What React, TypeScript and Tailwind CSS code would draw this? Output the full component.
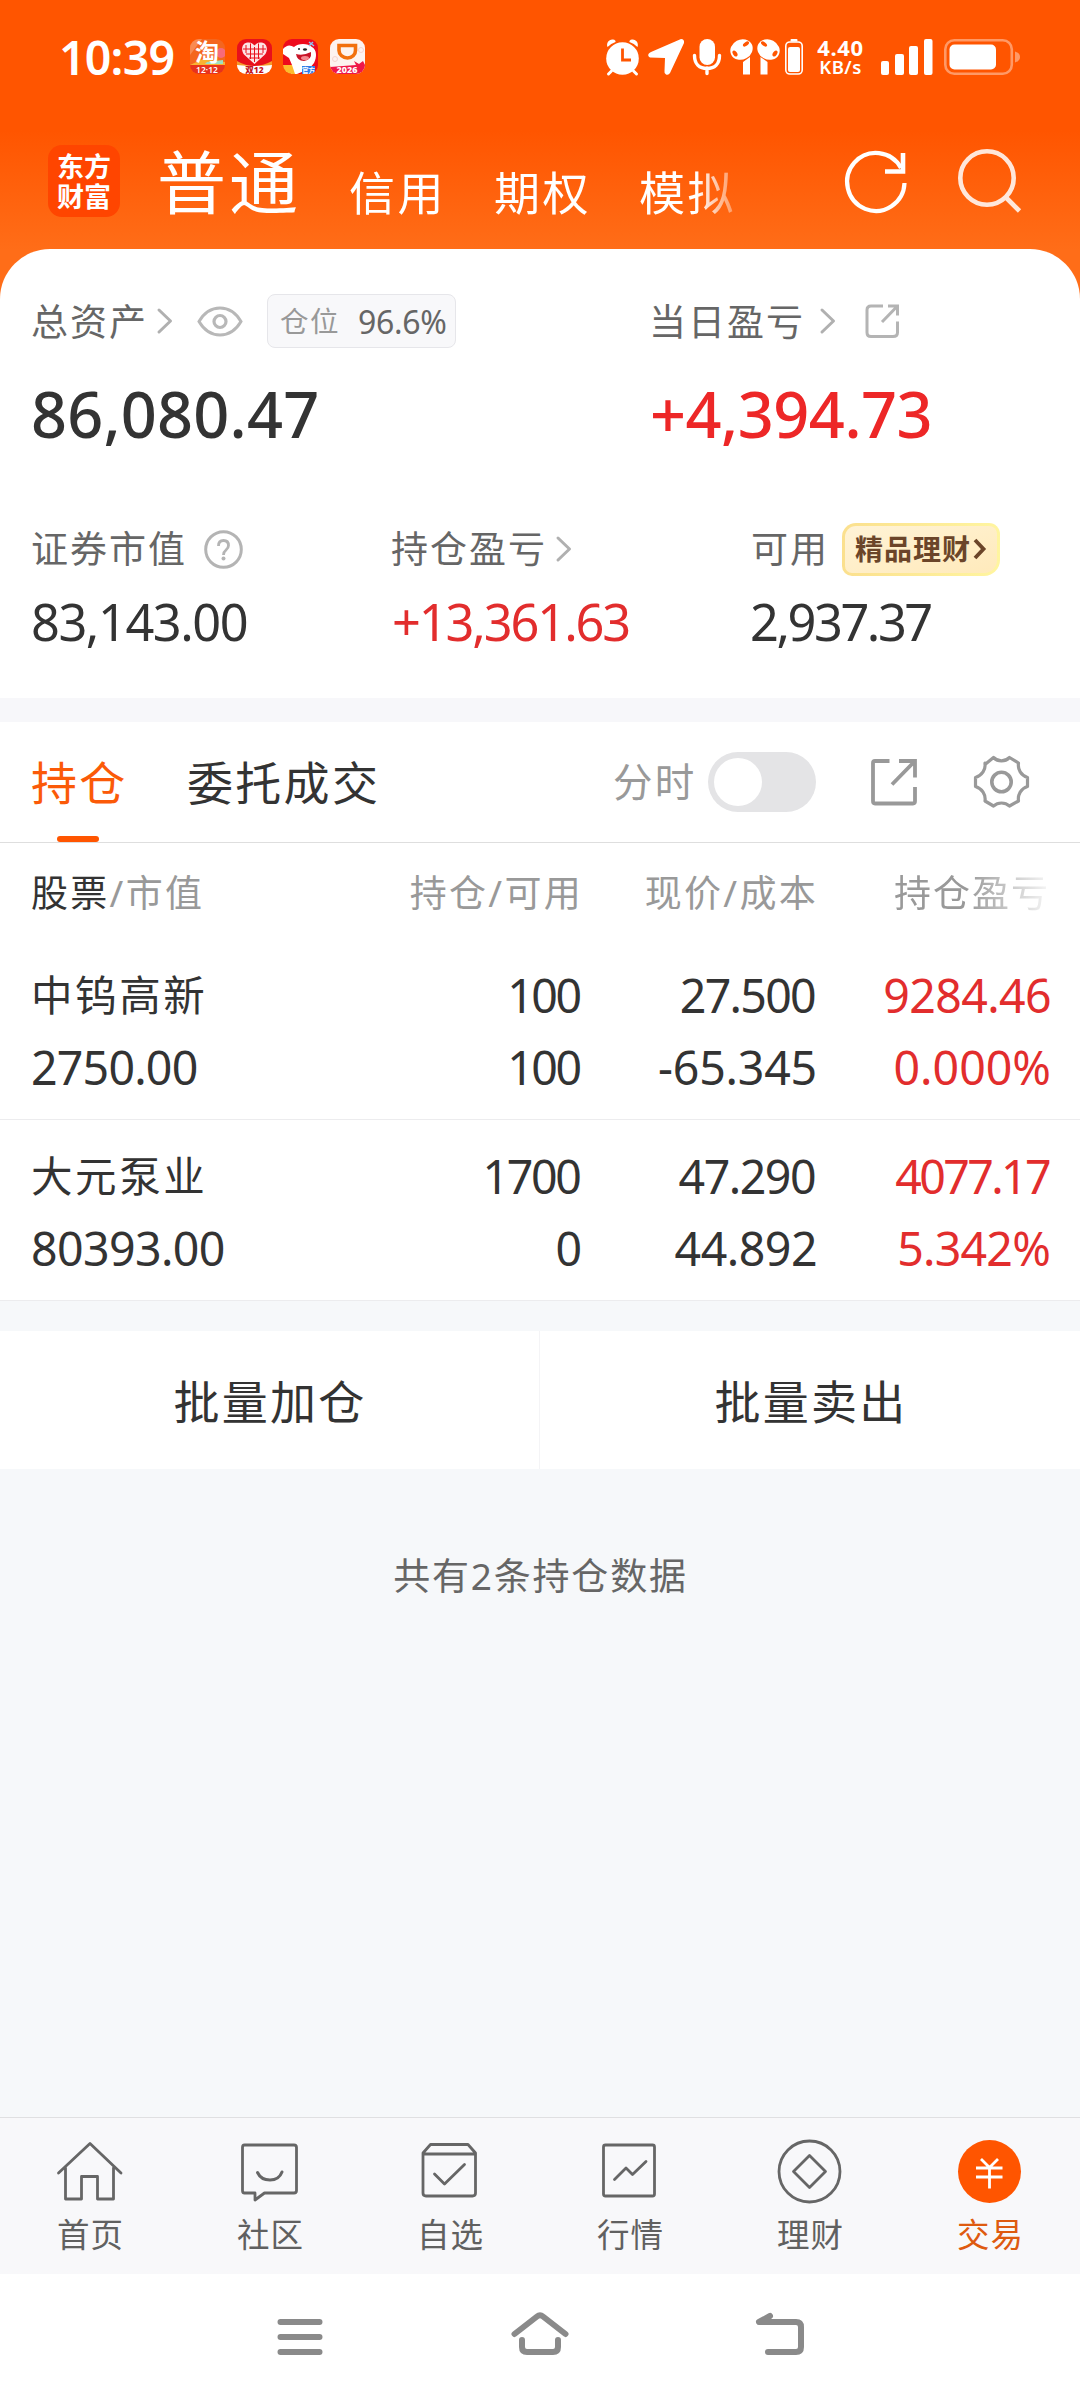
import type { ReactNode } from 'react';

type IconProps = { box: [number, number, number, number]; className?: string; children: ReactNode };

function Icon({ box, className = '', children }: IconProps) {
  return (
    <svg width={box[2]} height={box[3]} viewBox={box.join(' ')} fill="none" className={`block shrink-0 overflow-visible ${className}`}>
      {children}
    </svg>
  );
}

function Chevron({ className = '' }: { className?: string }) {
  return (
    <Icon box={[0, 0, 16, 26]} className={className}>
      <path d="M2 2L13.500 13L2 24" stroke="#b0b0b0" strokeWidth="3" strokeLinecap="round" strokeLinejoin="round" />
    </Icon>
  );
}

function AppBadges() {
  return (
    <div className="ml-[13px] flex gap-[11.5px]">
      <Icon box={[0, 0, 35, 35]}>
        <clipPath id="app"><rect width="35" height="35" rx="9" /></clipPath>
        <g clipPath="url(#app)">
          <rect width="35" height="35" fill="#f4661f" />
          <path d="M0 0H12L0 16Z" fill="#f98a52" />
          <circle cx="31" cy="14" r="5" fill="#f76a7a" />
          <path d="M0 26L13 20L35 23V27H0Z" fill="#f9b233" />
          <path d="M17 23L33 21V25H15Z" fill="#9be0c4" />
          <rect y="26" width="35" height="9" fill="#e8321c" />
          <text x="17" y="21.500" textAnchor="middle" fontSize="24" fontWeight="700" fill="#fff" fontFamily="Noto Sans CJK SC, sans-serif">淘</text>
          <text x="17" y="34" textAnchor="middle" fontSize="8.500" fontWeight="600" fill="#fff" fontFamily="Noto Sans, sans-serif">12·12</text>
        </g>
      </Icon>
      <Icon box={[0, 0, 35, 35]}>
        <g clipPath="url(#app)">
          <rect width="35" height="35" fill="#e8101c" />
          <path d="M0 22Q17 32 35 22V35H0Z" fill="#f59a2a" />
          <path d="M0 26Q17 28 35 26V35H0Z" fill="#fff" />
          <path d="M17.500 25L7 15.500C3.500 11 5 4 10.500 3.500C14 3 16 4.500 17.500 6.500C19 4.500 21 3 24.500 3.500C30 4 31.500 11 28 15.500Z" fill="#fde4e4" />
          <path d="M9 6V14M13.500 4.500V20M17.500 8V23M21.500 4.500V20M26 6V14M6 10H29M9 15H26M12 19H23" stroke="#e8101c" strokeWidth="1" />
          <text x="17.500" y="34" textAnchor="middle" fontSize="8.500" fontWeight="800" fill="#c1121c" fontFamily="Noto Sans, Noto Sans CJK SC, sans-serif">双12</text>
        </g>
      </Icon>
      <Icon box={[0, 0, 35, 35]}>
        <g clipPath="url(#app)">
          <rect width="35" height="35" fill="#ee0a1c" />
          <path d="M0 12L11 8C15 4 25 4 29 8C34 11 34 18 31 24L26 30L14 35H8L9 26L6 19L0 15Z" fill="#fff" />
          <path d="M0 10Q5 4 11 8L7 15L0 14Z" fill="#fff" />
          <path d="M13 15Q20 17 28 13Q29 21 21 22Q14 22 13 15Z" fill="#c81428" />
          <ellipse cx="22" cy="19" rx="4" ry="2" fill="#f58a90" />
          <circle cx="16" cy="10" r="1" fill="#222" /><ellipse cx="22" cy="10.500" rx="2" ry="1.300" fill="#222" />
          <path d="M26 3L31 7M30 3L26 7" stroke="#8cc4f4" strokeWidth="1.500" />
          <path d="M0 26H9L12 35H0Z" fill="#fdbb2c" />
          <rect x="19" y="27" width="13" height="8" fill="#2f7de8" />
          <text x="25.500" y="34" textAnchor="middle" fontSize="6.500" fontWeight="700" fill="#fff" fontFamily="Noto Sans CJK SC, sans-serif">官方</text>
        </g>
      </Icon>
      <Icon box={[0, 0, 35, 35]}>
        <g clipPath="url(#app)">
          <rect width="35" height="35" fill="#fdf3f0" />
          <path d="M9 6.500H25.500V11.500C25.500 15.500 22 19 17.500 19S9 15.500 9 11.500Z" stroke="#f2700f" strokeWidth="3.600" />
          <circle cx="5" cy="20" r="2.500" stroke="#f6d3d0" /><circle cx="31" cy="11" r="2.500" stroke="#f6d3d0" />
          <path d="M0 28L26 26L24 22L29 25L33 22L35 26V35H0Z" fill="#ef1749" />
          <text x="17" y="33.800" textAnchor="middle" fontSize="9" fontWeight="800" fill="#fff" fontFamily="Noto Sans, sans-serif">2026</text>
        </g>
      </Icon>
    </div>
  );
}

function StatusBar() {
  return (
    <div className="flex h-[113px] items-center pl-[59px] text-white">
      <div className="w-[118px] text-[46.500px] font-semibold leading-[60px] tracking-[-0.800px]">10:39</div>
      <AppBadges />
      <div className="ml-[241px] flex items-center">
        <Icon box={[606, 39, 33, 36]}>
          <g fill="#fff">
            <circle cx="622.500" cy="58.500" r="16.300" />
            <path d="M607.500 47C606 43 609 39 613 39.500Q616 40 615.500 42Q610 44 607.500 47ZM637.500 47C639 43 636 39 632 39.500Q629 40 629.500 42Q635 44 637.500 47Z" />
          </g>
          <path d="M611.500 71L608.500 74M633.500 71L636.500 74" stroke="#fff" strokeWidth="3" strokeLinecap="round" />
          <path d="M622.500 48.500V60H631" stroke="#ff5500" strokeWidth="2.800" />
        </Icon>
        <Icon box={[648, 39, 36, 36]} className="ml-[9px]">
          <path d="M681 39Q684.500 39 684 43L670 73Q668.500 75.500 666 74.500Q664 73.500 664.500 71L665 58L650 57.500Q647.500 56 648.500 54Q649 53 651 52Z" fill="#fff" />
        </Icon>
        <Icon box={[693, 39, 28, 36]} className="ml-[9px]">
          <rect x="699.500" y="39" width="15.500" height="26" rx="7.750" fill="#fff" />
          <path d="M694.500 55.500C694.500 64 699.500 68.500 707 68.500S719.500 64 719.500 55.500M707 68V73.500" stroke="#fff" strokeWidth="3.400" strokeLinecap="round" />
        </Icon>
        <Icon box={[730, 39, 50, 36]} className="ml-[9px]">
          <g fill="#fff">
            <ellipse cx="741.500" cy="49.500" rx="11.500" ry="10" transform="rotate(-28 741.500 49.500)" />
            <ellipse cx="768.500" cy="49.500" rx="11.500" ry="10" transform="rotate(28 768.500 49.500)" />
            <path d="M743 62L750 57V74.500H743ZM767.500 62L760.500 57V74.500H767.500Z" />
          </g>
          <g fill="#ff5500">
            <ellipse cx="746" cy="44" rx="3.500" ry="1.800" transform="rotate(-35 746 44)" />
            <ellipse cx="735" cy="53.500" rx="2" ry="3.300" transform="rotate(-35 735 53.500)" />
            <ellipse cx="764" cy="44" rx="3.500" ry="1.800" transform="rotate(35 764 44)" />
            <ellipse cx="775" cy="53.500" rx="2" ry="3.300" transform="rotate(35 775 53.500)" />
          </g>
        </Icon>
        <Icon box={[785, 39, 18, 36]} className="ml-[5px]">
          <rect x="785.800" y="42" width="16.400" height="32" rx="4" stroke="#fff" strokeWidth="1.600" />
          <rect x="788" y="47" width="12" height="25" rx="2" fill="#fff" />
          <rect x="790.500" y="39" width="7" height="2.500" rx="1" fill="#fff" />
        </Icon>
        <div className="ml-[13px] w-[50px] text-center text-[22px] font-bold leading-[20px]">
          <div className="tracking-[0.700px]">4.40</div>
          <div className="text-[18.500px] font-semibold tracking-[0.500px]">KB/s</div>
        </div>
        <Icon box={[881, 39, 52, 36]} className="ml-[15px]">
          <g fill="#fff">
            <rect x="881" y="61" width="8" height="14" rx="2" />
            <rect x="895" y="54" width="9" height="21" rx="2" />
            <rect x="909" y="46" width="9" height="29" rx="2" />
            <rect x="924" y="39" width="8.500" height="36" rx="2" />
          </g>
        </Icon>
        <Icon box={[944, 39, 76, 36]} className="ml-[11px]">
          <rect x="945.300" y="40.300" width="66.500" height="33.400" rx="9" stroke="#fff" strokeOpacity="0.400" strokeWidth="2.600" />
          <rect x="949.500" y="44.500" width="46.500" height="25" rx="5" fill="#fff" />
          <path d="M1015 51.500Q1020 53 1020 57T1015 62.500Z" fill="#fff" fillOpacity="0.400" />
        </Icon>
      </div>
    </div>
  );
}

function TitleBar() {
  return (
    <div className="flex h-[136px] pl-12 text-white">
      <div className="mt-8 flex h-[72px] w-[72px] shrink-0 flex-col items-center justify-center rounded-[14px] bg-[#ff4500] font-['Noto_Sans_CJK_SC',sans-serif] text-[27px] font-bold leading-[30px]">
        <span>东方</span>
        <span>财富</span>
      </div>
      <div className="ml-[37px] w-[189px] text-[69px] leading-[138px] tracking-[3px]">普通</div>
      <div className="flex w-[430px] text-[46px] leading-[159px] tracking-[2.500px] [mask-image:linear-gradient(to_right,black_350px,transparent_408px)]">
        <span className="ml-[3px] w-[145px] shrink-0">信用</span>
        <span className="w-[145px] shrink-0">期权</span>
        <span className="shrink-0">模拟</span>
      </div>
      <Icon box={[843, 150, 64, 64]} className="ml-[67px] mt-[37px]">
        <path d="M904.500 183A28.700 29 0 1 1 901 168" stroke="#fff" strokeWidth="4.200" />
        <path d="M903 153V171.500H885" stroke="#fff" strokeWidth="4.600" />
      </Icon>
      <Icon box={[958, 148, 64, 66]} className="ml-[51px] mt-[35px] opacity-85">
        <circle cx="987" cy="178" r="26.700" stroke="#fff" strokeWidth="4.600" />
        <path d="M1005.500 197L1019.500 211" stroke="#fff" strokeWidth="4.600" />
      </Icon>
    </div>
  );
}

function Summary() {
  return (
    <div className="h-[449px] rounded-t-[50px] bg-white pl-[31px] pt-[41px] text-[37px] tracking-[2px] text-[#666]">
      <div className="flex h-[62px] items-center leading-[61px]">
        <span className="w-[126px]">总资产</span>
        <Chevron />
        <Icon box={[197, 304, 46, 31]} className="ml-6">
          <path d="M199 319.500C204 311 211 306 220 306S236 311 241 319.500C236 328 229 333 220 333S204 328 199 319.500Z" stroke="#b8b8b8" strokeWidth="3" />
          <circle cx="220" cy="319.500" r="6" stroke="#b8b8b8" strokeWidth="3.200" />
        </Icon>
        <div className="ml-[24px] flex h-[54px] w-[189px] items-center rounded-lg border border-[#e6e6ea] bg-[#f8f8fa] pl-[12px]">
          <span className="w-[78px] text-[28.500px] tracking-[1.500px] text-[#999]">仓位</span>
          <span className="text-[32px] tracking-[-0.300px]">96.6%</span>
        </div>
        <span className="ml-[193px] w-[171px]">当日盈亏</span>
        <Chevron />
        <Icon box={[865, 304, 35, 35]} className="ml-[29px]">
          <path d="M883 306H871Q867 306 867 310V332.500Q867 336.500 871 336.500H893Q897.500 336.500 897.500 332.500V321.500M888 306H897.500V315.500M897 306.500L882 322" stroke="#b4b4b4" strokeWidth="3" />
        </Icon>
      </div>
      <div className="mt-[25px] flex h-[74px] text-[63px] font-medium leading-[74px]">
        <span className="w-[619px] tracking-[0.200px] text-[#333]">86,080.47</span>
        <span className="tracking-[-0.500px] text-[#ed2727]">+4,394.73</span>
      </div>
      <div className="mt-[67px] flex h-[62px] items-center leading-[62px]">
        <span className="w-[173px]">证券市值</span>
        <Icon box={[204, 530, 39, 39]}>
          <circle cx="223.500" cy="549.500" r="17.800" stroke="#b4b4b4" strokeWidth="3" />
          <path d="M218.500 546Q218.500 540.500 223.500 540.500T228.500 545.500Q228.500 548 226 550T223.500 555" stroke="#b4b4b4" strokeWidth="2.800" />
          <circle cx="223.500" cy="558.500" r="2" fill="#b4b4b4" />
        </Icon>
        <span className="ml-[148px] w-[165px]">持仓盈亏</span>
        <Chevron />
        <span className="ml-[179px] w-[91px]">可用</span>
        <div className="flex h-[53px] w-[158px] items-center rounded-[14px_11px_16px_10px] bg-linear-to-r from-[#fbe08e] to-[#fff5a0] p-[3px]">
          <div className="flex h-full w-full items-center rounded-[11px_8px_13px_7px] bg-linear-to-br from-[#fff3d6] to-[#ffeabb] pl-[10px]">
            <span className="w-[118px] text-[28px] font-bold leading-[44px] tracking-[1px] text-[#6b4529]">精品理财</span>
            <Icon box={[0, 0, 14, 22]}>
              <path d="M2 2L10.500 11L2 20" stroke="#6b4529" strokeWidth="3.800" />
            </Icon>
          </div>
        </div>
      </div>
      <div className="mt-[10px] flex h-[64px] text-[50.500px] leading-[64px]">
        <span className="w-[361px] tracking-[-1.450px] text-[#333]">83,143.00</span>
        <span className="w-[358px] tracking-[-2.100px] text-[#e22d2d]">+13,361.63</span>
        <span className="tracking-[-2.450px] text-[#333]">2,937.37</span>
      </div>
    </div>
  );
}

function Toolbar() {
  return (
    <div className="relative flex h-[121px] items-center border-b border-[#dedede] pl-[31px] text-[46px] leading-[120px] tracking-[2.300px] text-[#333]">
      <span className="w-[156px] text-[#fb5a08]">持仓</span>
      <span className="w-[426px]">委托成交</span>
      <span className="w-[95px] text-[39.500px]  text-[#999]">分时</span>
      <div className="h-[60px] w-[108px] rounded-full bg-[#e4e4e6] p-[6px]">
        <div className="h-12 w-12 rounded-full bg-white" />
      </div>
      <Icon box={[871, 759, 47, 47]} className="ml-[55px]">
        <path d="M889.500 761H875Q873 761 873 763V801Q873 803.500 875 803.500H913Q915 803.500 915 801V787M899 761H915V777.500M914.500 761.500L892 784.500" stroke="#999" strokeWidth="3.800" />
      </Icon>
      <Icon box={[974, 755, 55, 54]} className="ml-14">
        <path d="M985 764.500L993.500 757.500C998 762 1005 762 1009.500 757.500L1018.500 763C1017.500 769.500 1021 775.500 1027.500 777.500V786.500C1021 788.500 1017.500 794.500 1018.500 801L1009.500 806C1005 802 998 802 993.500 806L985 801C986 794.500 982 788.500 975.500 786.500V777.500C982 775.500 986 769.500 985 763Z" stroke="#999" strokeWidth="3.200" strokeLinejoin="round" />
        <circle cx="1001.500" cy="782" r="9.700" stroke="#999" strokeWidth="3.600" />
      </Icon>
      <div className="absolute bottom-0 left-[57px] h-[6px] w-[42px] rounded-full bg-[#ff5500]" />
    </div>
  );
}

type Cell = [text: string, tracking: string];

const holdings: { name: string; top: Cell[]; bottom: Cell[] }[] = [
  {
    name: '中钨高新',
    top: [['100', 'tracking-[-2.500px] mr-[2.500px]'], ['27.500', 'tracking-[-1.700px] mr-[2px]'], ['9284.46', 'tracking-[-0.600px] mr-[1px]']],
    bottom: [['2750.00', 'tracking-[-0.800px]'], ['100', 'tracking-[-2.500px] mr-[2.500px]'], ['-65.345', 'tracking-[-0.200px]'], ['0.000%', 'tracking-normal mr-[1px]']],
  },
  {
    name: '大元泵业',
    top: [['1700', 'tracking-[-2.400px] mr-[2.600px]'], ['47.290', 'tracking-[-1.500px] mr-[2px]'], ['4077.17', 'tracking-[-2.600px] mr-[3px]']],
    bottom: [['80393.00', 'tracking-[-0.600px]'], ['0', 'tracking-normal'], ['44.892', 'tracking-[-0.500px]'], ['5.342%', 'tracking-[-0.800px] mr-[2px]']],
  },
];

const columns = 'grid grid-cols-[330px_221px_235px_235px] pl-[31px]';

function Holdings() {
  return (
    <div>
      <div className={`${columns} h-[96px] text-[37px] leading-[99px] tracking-[2.300px] text-[#999]`}>
        <span><span className="text-[#333]">股票</span>/市值</span>
        <span className="-mr-[1px] text-right">持仓/可用</span>
        <span className="-mr-[1px] text-right">现价/成本</span>
        <span className="pl-[77px] tracking-[2px] [mask-image:linear-gradient(to_right,black_150px,transparent_240px)]">持仓盈亏</span>
      </div>
      {holdings.map((h) => (
        <div key={h.name} className="h-[181px] border-b border-[#ececee] pb-4 pt-5 text-[46.500px] leading-[72px] text-[#333]">
          <div className={columns}>
            <span className="text-[41.500px] tracking-[2.600px]">{h.name}</span>
            {h.top.map(([text, tracking], i) => (
              <span key={i} className={`text-right ${tracking} ${i === 2 ? 'text-[#e22d2d]' : ''}`}>{text}</span>
            ))}
          </div>
          <div className={columns}>
            {h.bottom.map(([text, tracking], i) => (
              <span key={i} className={`${i > 0 ? 'text-right' : ''} ${tracking} ${i === 3 ? 'text-[#e22d2d]' : ''}`}>{text}</span>
            ))}
          </div>
        </div>
      ))}
    </div>
  );
}

const tabs: { label: string; icon: ReactNode }[] = [
  {
    label: '首页',
    icon: (
      <Icon box={[54, 2140, 72, 64]}>
        <path d="M58.500 2173L90 2143.500L121 2173M65.500 2168V2199H81.500V2176.500H97.500V2199H113.500V2168" />
      </Icon>
    ),
  },
  {
    label: '社区',
    icon: (
      <Icon box={[234, 2140, 72, 64]}>
        <path d="M244.500 2145H294Q296.500 2145 296.500 2147.500V2190.500Q296.500 2193 294 2193H264.500L255 2200V2193H244.500Q242.500 2193 242.500 2190.500V2147.500Q242.500 2145 244.500 2145Z" />
        <path d="M257.500 2172.500Q261 2180 270 2180T282 2172" strokeWidth="3" />
      </Icon>
    ),
  },
  {
    label: '自选',
    icon: (
      <Icon box={[414, 2140, 72, 64]}>
        <path d="M423 2153L430.500 2144.500H468L475.500 2153V2193Q475.500 2196 472.500 2196H426Q423 2196 423 2193ZM423 2154H475.500M434.500 2174L444.500 2184L464.500 2164.500" />
      </Icon>
    ),
  },
  {
    label: '行情',
    icon: (
      <Icon box={[594, 2140, 72, 64]}>
        <rect x="603.500" y="2145" width="51" height="51" rx="2" />
        <path d="M614.500 2179.500L626 2168L632.500 2174.500L646 2161.500" />
      </Icon>
    ),
  },
  {
    label: '理财',
    icon: (
      <Icon box={[774, 2140, 72, 64]}>
        <circle cx="809.500" cy="2171.500" r="30.500" />
        <path d="M809.500 2155.500L825.500 2171.500L809.500 2187.500L793.500 2171.500Z" />
      </Icon>
    ),
  },
  {
    label: '交易',
    icon: (
      <Icon box={[954, 2140, 72, 64]}>
        <circle cx="989.500" cy="2171.500" r="31.500" fill="#ff5500" stroke="none" />
        <path d="M981 2159L989.500 2167.500L998 2159M989.500 2167.500V2188.500M976 2168H1002.500M976 2177H1002.500" stroke="#fff" strokeLinecap="butt" />
      </Icon>
    ),
  },
];

export default function App() {
  return (
    <div className="flex h-[2400px] w-[1080px] flex-col overflow-hidden bg-white font-['Noto_Sans','Noto_Sans_CJK_SC',sans-serif]">
      <div className="bg-[linear-gradient(#ff5500_0px,#ff5500_130px,#ff6d18_250px)]">
        <StatusBar />
        <TitleBar />
        <Summary />
      </div>
      <div className="h-6 bg-[#f7f7fa]" />
      <Toolbar />
      <Holdings />
      <div className="h-[30px] bg-[#f6f8fa]" />
      <div className="grid h-[138px] grid-cols-2 text-center text-[46px] leading-[140px] tracking-[2.200px] text-[#333]">
        <span className="border-r border-[#f4f4f6] pl-[1px]">批量加仓</span>
        <span className="pl-[2px]">批量卖出</span>
      </div>
      <div className="flex-1 bg-[#f6f8fa] pl-[1px] pt-[76px] text-center text-[37px] leading-[62px] tracking-[1.800px] text-[#666]">共有2条持仓数据</div>
      <div className="grid h-[157px] shrink-0 grid-cols-6 border-t border-[#e0e0e2] bg-[#f8f8fa] text-[32.500px] leading-[44px] tracking-[1px] text-[#606060]">
        {tabs.map((tab) => (
          <div key={tab.label} className="flex flex-col items-center pt-[22px]">
            <div className="stroke-[#666] [stroke-linecap:round] [stroke-linejoin:round] [stroke-width:2.8px]">{tab.icon}</div>
            <span className={`ml-[1px] mt-[9px] ${tab.label === '交易' ? 'text-[#de5a10]' : ''}`}>{tab.label}</span>
          </div>
        ))}
      </div>
      <div className="flex h-[126px] shrink-0 pt-[37px] stroke-[#8a8a8a] [stroke-linecap:round] [stroke-linejoin:round] [stroke-width:6px]">
        <Icon box={[270, 2311, 60, 50]} className="ml-[270px]">
          <path d="M280.500 2322H319.500M280.500 2337H319.500M280.500 2352H319.500" />
        </Icon>
        <Icon box={[508, 2311, 64, 50]} className="ml-[178px]">
          <path d="M514.500 2334L537 2316.500Q540 2314 543 2316.500L565.500 2334M522 2340V2347Q522 2352 527 2352H553Q558 2352 558 2347V2340" />
        </Icon>
        <Icon box={[750, 2311, 60, 50]} className="ml-[178px]">
          <path d="M770 2316L759 2322H796Q801 2322 801 2327V2347Q801 2352 796 2352H768" />
        </Icon>
      </div>
    </div>
  );
}
